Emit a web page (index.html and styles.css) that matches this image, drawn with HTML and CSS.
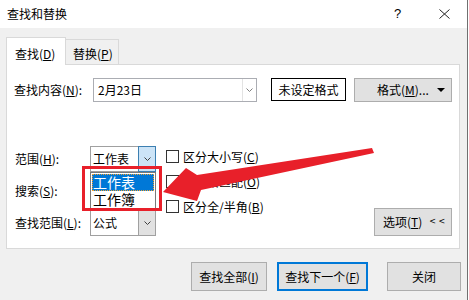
FILE: index.html
```html
<!DOCTYPE html>
<html>
<head>
<meta charset="utf-8">
<link rel="stylesheet" href="styles.css">
</head>
<body>
<div class="window">
  <div class="titlebar">
    <span class="title">查找和替换</span>
    <span class="help">?</span>
    <span class="close"><svg width="11" height="10" viewBox="0 0 11 10"><path d="M0.5 0.5L10.5 9.5M10.5 0.5L0.5 9.5" stroke="#222" stroke-width="1" fill="none"/></svg></span>
  </div>
  <div class="content">
    <div class="tabs">
      <div class="tab active">查找(<u>D</u>)</div>
      <div class="tab">替换(<u>P</u>)</div>
    </div>
    <div class="panel">
      <div class="find-row">
        <span class="lbl find-lbl">查找内容(<u>N</u>):</span>
        <div class="input">
          <span class="input-text">2月23日</span>
          <span class="input-btn"><svg width="7" height="4" viewBox="0 0 7 4"><path d="M0.5 0.5L3.5 3.5L6.5 0.5" stroke="#808080" fill="none"/></svg></span>
        </div>
        <div class="noformat">未设定格式</div>
        <div class="btn format-btn"><span>格式(<u>M</u>)...</span><svg class="tri" width="8" height="4" viewBox="0 0 8 4"><path d="M0 0H8L4 4Z" fill="#000"/></svg></div>
      </div>
      <div class="opts">
        <div class="combos">
          <div class="crow">
            <span class="lbl">范围(<u>H</u>):</span>
            <div class="combo">
              <span class="ctext">工作表</span>
              <span class="cbtn hot"><svg width="7" height="4" viewBox="0 0 7 4"><path d="M0.5 0.5L3.5 3.5L6.5 0.5" stroke="#404040" fill="none"/></svg></span>
              <div class="droplist">
                <div class="ditem sel">工作表</div>
                <div class="ditem">工作簿</div>
              </div>
            </div>
          </div>
          <div class="crow">
            <span class="lbl">搜索(<u>S</u>):</span>
            <div class="combo">
              <span class="ctext"></span>
              <span class="cbtn"><svg width="7" height="4" viewBox="0 0 7 4"><path d="M0.5 0.5L3.5 3.5L6.5 0.5" stroke="#404040" fill="none"/></svg></span>
            </div>
          </div>
          <div class="crow">
            <span class="lbl">查找范围(<u>L</u>):</span>
            <div class="combo">
              <span class="ctext">公式</span>
              <span class="cbtn"><svg width="7" height="4" viewBox="0 0 7 4"><path d="M0.5 0.5L3.5 3.5L6.5 0.5" stroke="#404040" fill="none"/></svg></span>
            </div>
          </div>
        </div>
        <div class="checks">
          <div class="chk"><span class="box"></span><span>区分大小写(<u>C</u>)</span></div>
          <div class="chk"><span class="box"></span><span>单元格匹配(<u>O</u>)</span></div>
          <div class="chk"><span class="box"></span><span>区分全/半角(<u>B</u>)</span></div>
        </div>
        <div class="btn options-btn">选项(<u>T</u>)<span class="lt">&lt; &lt;</span></div>
      </div>
    </div>
    <div class="actions">
      <div class="btn act act-all">查找全部(<u>I</u>)</div>
      <div class="btn act act-next">查找下一个(<u>F</u>)</div>
      <div class="btn act act-close">关闭</div>
    </div>
  </div>
  <div class="annot-rect"></div>
  <svg class="annot-arrow" width="469" height="300" viewBox="0 0 469 300">
    <polygon points="372,148 374,153 201,190 197,201 163,192 186,168 197,175" fill="#e8202a"/>
  </svg>
</div>
</body>
</html>
```

FILE: styles.css
```css
html, body {
  margin: 0;
  padding: 0;
}
body {
  background: #ffffff;
  font-family: "Noto Sans CJK SC", "Microsoft YaHei", sans-serif;
  font-size: 12px;
  line-height: 16px;
  color: #000;
}
u {
  text-decoration: underline;
  text-underline-offset: 1px;
}
.window {
  position: relative;
  width: 467px;
  height: 300px;
  background: #f0f0f0;
  border-right: 1px solid #707070;
  overflow: hidden;
}
.titlebar {
  height: 28px;
  background: #fff;
  display: flex;
  align-items: center;
  padding-left: 7px;
}
.title {
  flex: 1;
}
.help {
  font-family: "Liberation Sans", sans-serif;
  font-size: 13px;
  width: 8px;
  margin-right: 37px;
}
.close {
  display: flex;
  width: 11px;
  margin-right: 17px;
}
.content {
  padding-top: 9px;
}
.tabs {
  display: flex;
  align-items: flex-end;
  height: 27px;
  margin-left: 6px;
}
.tab {
  box-sizing: border-box;
  border: 1px solid #d9d9d9;
  border-bottom: none;
  display: flex;
  align-items: center;
  white-space: nowrap;
}
.tab.active {
  width: 60px;
  height: 28px;
  background: #fff;
  padding: 4px 0 0 8px;
  position: relative;
  z-index: 1;
  margin-bottom: -1px;
}
.tab:not(.active) {
  width: 53px;
  height: 25px;
  border-left: none;
  padding: 3px 0 0 7px;
  background: #f0f0f0;
}
.panel {
  box-sizing: border-box;
  margin-left: 6px;
  width: 454px;
  height: 185px;
  border: 1px solid #d9d9d9;
  background: #fff;
  padding: 13px 7px 0 7px;
}
.find-row {
  display: flex;
  align-items: center;
  height: 24px;
}
.find-lbl {
  width: 79px;
  white-space: nowrap;
}
.input {
  box-sizing: border-box;
  width: 164px;
  height: 24px;
  border: 1px solid #abadb3;
  display: flex;
  align-items: center;
}
.input-text {
  flex: 1;
  padding-left: 4px;
}
.input-btn {
  box-sizing: border-box;
  width: 14px;
  height: 22px;
  border-left: 1px solid #e3e3e3;
  display: flex;
  align-items: center;
  justify-content: center;
}
.noformat {
  box-sizing: border-box;
  margin-left: 14px;
  width: 75px;
  height: 23px;
  border: 1px solid #000;
  display: flex;
  align-items: center;
  justify-content: center;
  margin-top: -1px;
  white-space: nowrap;
}
.btn {
  box-sizing: border-box;
  background: #e1e1e1;
  border: 1px solid #adadad;
  display: flex;
  align-items: center;
  white-space: nowrap;
}
.format-btn {
  margin-left: 8px;
  width: 98px;
  height: 24px;
  padding-left: 22px;
}
.format-btn .tri {
  margin-left: auto;
  margin-right: 6px;
}
.opts {
  display: flex;
  align-items: flex-start;
  margin-top: 44px;
}
.combos {
  display: flex;
  flex-direction: column;
  gap: 6px;
}
.crow {
  display: flex;
  align-items: center;
  height: 26px;
}
.crow .lbl {
  width: 75px;
  padding-left: 1px;
  white-space: nowrap;
}
.combo {
  position: relative;
  box-sizing: border-box;
  width: 66px;
  height: 26px;
  border: 1px solid #a0a0a0;
  display: flex;
  align-items: center;
}
.ctext {
  flex: 1;
  padding-left: 2px;
}
.cbtn {
  box-sizing: border-box;
  width: 17px;
  height: 24px;
  background: #e1e1e1;
  border-left: 1px solid #a0a0a0;
  display: flex;
  align-items: center;
  justify-content: center;
}
.cbtn.hot {
  background: #cce4f7;
  border: 1px solid #3c7fb1;
  height: 26px;
  width: 18px;
  margin-right: -1px;
}
.droplist {
  position: absolute;
  left: -1px;
  top: 25px;
  box-sizing: border-box;
  width: 66px;
  height: 37px;
  background: #fff;
  border: 1px solid #7a7a7a;
  padding: 1px 0;
  z-index: 2;
}
.ditem {
  font-size: 14px;
  line-height: 17px;
  height: 17px;
  padding-left: 1px;
  margin: 0 1px;
}
.ditem.sel {
  background: #0078d7;
  color: #fff;
  outline: 1px dotted #f0a030;
  outline-offset: -1px;
}
.checks {
  display: flex;
  flex-direction: column;
  gap: 12px;
  margin-left: 10px;
  padding-top: 4px;
}
.chk {
  display: flex;
  align-items: center;
  height: 13px;
  white-space: nowrap;
}
.box {
  box-sizing: border-box;
  width: 13px;
  height: 13px;
  border: 1px solid #333;
  background: #fff;
  margin-right: 4px;
}
.options-btn {
  margin-left: auto;
  align-self: flex-end;
  width: 78px;
  height: 28px;
  padding-left: 8px;
}
.lt {
  font-family: "DejaVu Sans", sans-serif;
  font-size: 8px;
  margin-left: 7px;
  letter-spacing: 0;
}
.actions {
  display: flex;
  justify-content: flex-end;
  padding-right: 6px;
  margin-top: 13px;
}
.act {
  height: 29px;
  justify-content: center;
}
.act-all {
  width: 76px;
}
.act-next {
  width: 91px;
  margin-left: 10px;
  border: 2px solid #0078d7;
}
.act-close {
  width: 74px;
  margin-left: 19px;
}
.annot-rect {
  position: absolute;
  left: 82px;
  top: 166px;
  width: 80px;
  height: 45px;
  box-sizing: border-box;
  border: 3px solid #e8202a;
  z-index: 5;
}
.annot-arrow {
  position: absolute;
  left: 0;
  top: 0;
  z-index: 6;
  pointer-events: none;
}
```
